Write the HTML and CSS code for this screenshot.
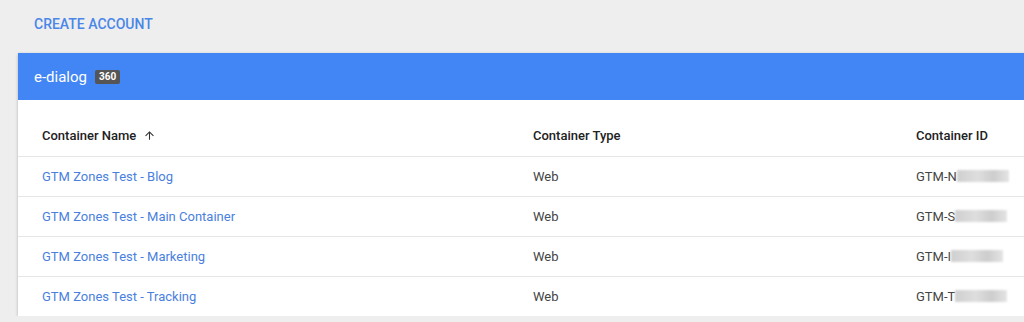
FILE: index.html
```
<!DOCTYPE html>
<html lang="en">
<head>
    <meta charset="UTF-8">
    <title>Containers</title>
    <link rel="stylesheet" href="styles.css">
</head>
<body>
    <div class="topbar">
        <a class="create-link" href="#">Create account</a>
    </div>
    <div class="card">
        <div class="card-head">
            <span class="account-name">e-dialog</span>
            <span class="badge">360</span>
        </div>
        <table class="containers">
            <thead>
                <tr>
                    <th class="col-name">Container Name
                        <svg class="sort-icon" width="13" height="13" viewBox="0 0 24 24"><path d="M4 12l1.41 1.41L11 7.83V20h2V7.83l5.58 5.59L20 12l-8-8-8 8z" fill="#333"/></svg>
                    </th>
                    <th class="col-type">Container Type</th>
                    <th class="col-id">Container ID</th>
                </tr>
            </thead>
            <tbody>
                <tr>
                    <td><a href="#">GTM Zones Test - Blog</a></td>
                    <td>Web</td>
                    <td>GTM-N<span class="masked"></span></td>
                </tr>
                <tr>
                    <td><a href="#">GTM Zones Test - Main Container</a></td>
                    <td>Web</td>
                    <td>GTM-S<span class="masked"></span></td>
                </tr>
                <tr>
                    <td><a href="#">GTM Zones Test - Marketing</a></td>
                    <td>Web</td>
                    <td>GTM-I<span class="masked"></span></td>
                </tr>
                <tr>
                    <td><a href="#">GTM Zones Test - Tracking</a></td>
                    <td>Web</td>
                    <td>GTM-T<span class="masked"></span></td>
                </tr>
            </tbody>
        </table>
    </div>
</body>
</html>
```
FILE: styles.css
```
*{
    margin: 0;
    padding: 0;
    box-sizing: border-box;
    font-family: Roboto, "Liberation Sans", Arial, sans-serif;
}
body {
    background: #eeeeee;
    overflow: hidden;
}
.topbar {
    height: 53px;
    padding-left: 34px;
    display: flex;
    align-items: center;
}
.create-link {
    color: #4a86e8;
    font-size: 14px;
    font-weight: 500;
    text-transform: uppercase;
    text-decoration: none;
    margin-top: -6px;
}
.card {
    margin-left: 18px;
    width: 1030px;
    background: #fff;
    box-shadow: 0 1px 3px rgba(0, 0, 0, 0.25);
}
.card-head {
    height: 47px;
    background: #4285f4;
    display: flex;
    align-items: center;
    padding-left: 16px;
    gap: 8px;
}
.account-name {
    color: #fff;
    font-size: 15px;
}
.badge {
    background: #555;
    color: #fff;
    font-size: 10px;
    font-weight: 700;
    padding: 2px 4px;
    border-radius: 2px;
    line-height: 10px;
}
.containers {
    width: 100%;
    border-collapse: collapse;
}
.containers th {
    text-align: left;
    font-size: 13px;
    font-weight: 500;
    color: #222;
    height: 56px;
    padding-top: 16px;
    border-bottom: 1px solid #e6e6e6;
}
.containers td {
    height: 40px;
    font-size: 13px;
    color: #444;
    border-bottom: 1px solid #e6e6e6;
}
.containers tbody tr:last-child td {
    border-bottom: none;
}
.containers th:first-child, .containers td:first-child {
    padding-left: 24px;
    width: 515px;
}
.containers th:nth-child(2), .containers td:nth-child(2) {
    width: 383px;
}
.containers td a {
    color: #4a7fe0;
    text-decoration: none;
}
.sort-icon {
    vertical-align: -2px;
    margin-left: 3px;
}
.masked {
    display: inline-block;
    width: 52px;
    height: 12px;
    vertical-align: -1px;
    background: linear-gradient(90deg, #cfcfcf, #dedede 40%, #cdcdcd 70%, #e4e4e4);
    filter: blur(1px);
}
```
